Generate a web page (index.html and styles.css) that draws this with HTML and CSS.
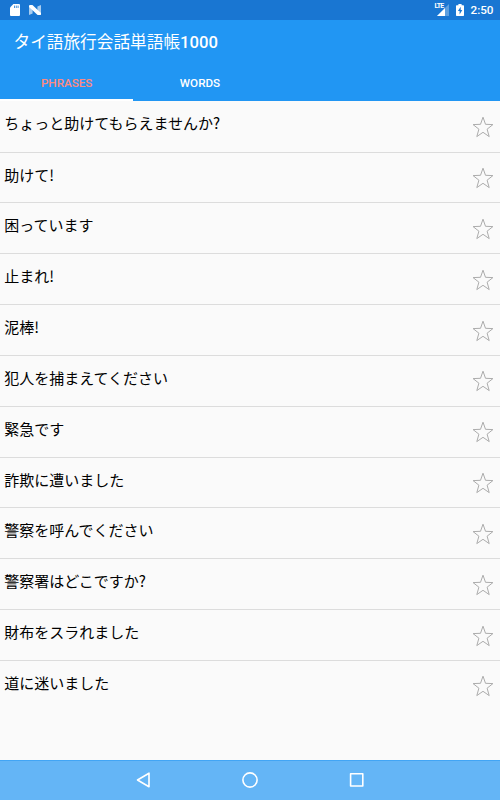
FILE: index.html
```html
<!DOCTYPE html>
<html lang="ja">
<head>
<meta charset="utf-8">
<title>タイ語旅行会話単語帳1000</title>
<link rel="stylesheet" href="styles.css">
</head>
<body>
<svg class="defs" width="0" height="0" aria-hidden="true">
  <symbol id="star" viewBox="0 0 22 22">
    <path d="M11 1.2 L13.5 8.3 L20.9 8.6 L15.1 13.2 L17.2 20.6 L11 16.3 L4.8 20.6 L6.9 13.2 L1.1 8.6 L8.5 8.3 Z" fill="none" stroke="#acacac" stroke-width="1"/>
  </symbol>
</svg>
<div class="screen">
  <div class="status">
    <svg class="sd" width="10" height="12" viewBox="0 0 10 12"><path d="M3.4 0H9Q10 0 10 1V11Q10 12 9 12H1Q0 12 0 11V3.4Z" fill="#fff"/><path d="M4.5 1.6V4M6.3 1.6V4M8.1 1.6V4" stroke="#1976d2" stroke-width=".8"/></svg>
    <svg class="nlogo" width="12" height="12" viewBox="0 0 12 12"><path d="M0 2H3.6V9.4L0 11ZM12 1L8.4 2.6V10H12Z" fill="#a9cdf0"/><path d="M0 1.8Q0 .9 1 .9H3.4L12 9V10.2Q12 11.1 11 11.1H8.6L0 3Z" fill="#fff"/></svg>
    <span class="spacer"></span>
    <div class="signal"><span class="lte">LTE</span><svg width="12" height="12" viewBox="0 0 12 12"><path d="M0 12L12 0V12Z" fill="#5e9fdf"/><path d="M0 12L8 4V12Z" fill="#fff"/></svg></div>
    <svg class="battery" width="8" height="12" viewBox="0 0 8 12"><path d="M2.4 0H5.6V1.2H7.3Q8 1.2 8 2V11.3Q8 12 7.3 12H.7Q0 12 0 11.3V2Q0 1.2 .7 1.2H2.4Z" fill="#fff"/><path d="M4.7 2.8L1.9 7.1H3.6V10.4L6.3 6.1H4.7Z" fill="#1976d2"/></svg>
    <span class="clock">2:50</span>
  </div>
  <header class="appbar">
    <h1 class="title"><span class="cjk">タイ語旅行会話単語帳</span>1000</h1>
    <nav class="tabs">
      <div class="tab active">PHRASES</div>
      <div class="tab">WORDS</div>
    </nav>
  </header>
  <main class="list">
    <div class="row"><span>ちょっと助けてもらえませんか?</span><svg class="star"><use href="#star"/></svg></div>
    <div class="row"><span>助けて!</span><svg class="star"><use href="#star"/></svg></div>
    <div class="row"><span>困っています</span><svg class="star"><use href="#star"/></svg></div>
    <div class="row"><span>止まれ!</span><svg class="star"><use href="#star"/></svg></div>
    <div class="row"><span>泥棒!</span><svg class="star"><use href="#star"/></svg></div>
    <div class="row"><span>犯人を捕まえてください</span><svg class="star"><use href="#star"/></svg></div>
    <div class="row"><span>緊急です</span><svg class="star"><use href="#star"/></svg></div>
    <div class="row"><span>詐欺に遭いました</span><svg class="star"><use href="#star"/></svg></div>
    <div class="row"><span>警察を呼んでください</span><svg class="star"><use href="#star"/></svg></div>
    <div class="row"><span>警察署はどこですか?</span><svg class="star"><use href="#star"/></svg></div>
    <div class="row"><span>財布をスラれました</span><svg class="star"><use href="#star"/></svg></div>
    <div class="row"><span>道に迷いました</span><svg class="star"><use href="#star"/></svg></div>
  </main>
  <footer class="navbar">
    <svg width="16" height="18" viewBox="0 0 16 18"><path d="M14 2.2V15.8L2.5 9Z"/></svg>
    <svg width="18" height="18" viewBox="0 0 18 18"><circle cx="9" cy="9" r="7.1"/></svg>
    <svg width="16" height="16" viewBox="0 0 16 16"><rect x="1.6" y="1.8" width="12.2" height="12.2"/></svg>
  </footer>
</div>
</body>
</html>
```
FILE: styles.css
```css
* { box-sizing: border-box; }
body {
  margin: 0;
  font-family: Roboto, "Noto Sans CJK JP", sans-serif;
  background: #fafafa;
}
.defs { display: block; }
.screen {
  width: 500px;
  height: 800px;
  display: flex;
  flex-direction: column;
  overflow: hidden;
}
.status {
  flex: none;
  height: 20px;
  padding: 0 6.5px 0 10px;
  display: flex;
  align-items: center;
  background: #1976d2;
  color: #fff;
}
.nlogo { margin-left: 9px; }
.spacer { flex: 1; }
.signal {
  display: flex;
  width: 15px;
  height: 12px;
  justify-content: flex-end;
  position: relative;
}
.lte {
  position: absolute;
  left: 0;
  top: -1px;
  font-size: 7px;
  line-height: 7px;
  font-weight: 700;
  letter-spacing: -0.8px;
}
.battery { margin-left: 7px; }
.clock {
  margin-left: 6px;
  font-size: 11.7px;
  line-height: 22px;
  font-weight: 500;
}
.appbar {
  flex: none;
  height: 81.4px;
  background: #2196f3;
  color: #fff;
}
.title {
  margin: 0;
  padding-left: 13.5px;
  height: 43px;
  line-height: 45px;
  font-size: 16.67px;
  font-weight: 500;
}
.cjk { font-weight: 400; }
.tabs { display: flex; height: 38.4px; }
.tab {
  width: 133.33px;
  height: 38.4px;
  line-height: 40px;
  text-align: center;
  font-size: 11.67px;
  font-weight: 500;
}
.tab.active {
  color: #ff8a80;
  border-bottom: 2px solid #fff;
}
.list { flex: 1; min-height: 0; }
.row {
  height: 50.83px;
  padding: 0 6.5px 0 4.3px;
  display: flex;
  justify-content: space-between;
  border-bottom: 1px solid #dcdcdc;
  color: #000;
  font-family: "Noto Sans CJK JP", sans-serif;
  font-size: 15px;
  line-height: 44.4px;
  white-space: nowrap;
}
.row:first-child { height: 51.2px; }
.row:last-child { border-bottom: 0; }
.star { width: 22px; height: 22px; margin-top: 14.6px; }
.navbar {
  flex: none;
  height: 40px;
  border-top: 1px solid #42a5f5;
  background: #64b5f6;
  display: flex;
  justify-content: center;
  align-items: center;
  gap: 90px;
  padding-bottom: 1px;
}
.navbar svg {
  fill: none;
  stroke: #fff;
  stroke-width: 1.6;
  stroke-linejoin: round;
}
```
